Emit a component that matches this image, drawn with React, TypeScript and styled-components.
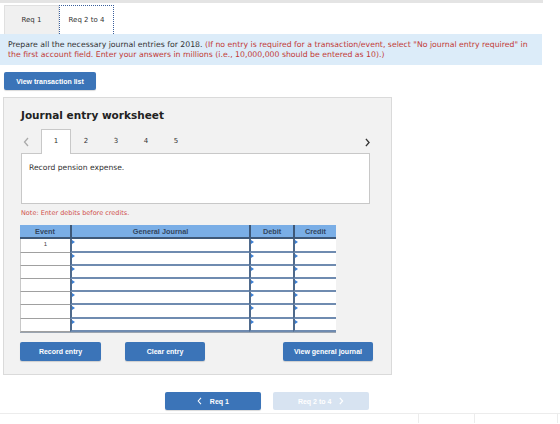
import React from "react";
import styled, { createGlobalStyle } from "styled-components";

const Global = createGlobalStyle`
  html, body { margin: 0; padding: 0; background: #fff; }
  body { font-family: "DejaVu Sans", Verdana, sans-serif; color: #333; }
  * { box-sizing: border-box; }
`;

const Page = styled.div`
  width: 560px;
  height: 424px;
  overflow: hidden;
  display: flex;
  flex-direction: column;
`;

const TopBar = styled.div`
  width: 543px;
  height: 3px;
  background: #e4e4e4;
`;

const TabRow = styled.div`
  display: flex;
  padding: 2px 0 0 4px;
  height: 31px;
`;

const ReqTab = styled.div<{ $active?: boolean }>`
  width: 55px;
  height: 29px;
  display: flex;
  align-items: center;
  justify-content: center;
  font-size: 7px;
  color: #333;
  background: ${(p) => (p.$active ? "#fff" : "#f0f0f0")};
  border: ${(p) => (p.$active ? "1px dotted #3a5f9c" : "1px solid #e0e0e0")};
  border-bottom: none;
`;

const InfoBox = styled.div`
  width: 542px;
  height: 31px;
  background: #dcecf9;
  padding: 6px 8px 0;
  font-size: 7.75px;
  line-height: 10px;
  color: #333;
  white-space: nowrap;
`;

const Red = styled.span`
  color: #c23a36;
`;

const Btn = styled.button<{ $w: number; $h?: number; $light?: boolean }>`
  width: ${(p) => p.$w}px;
  height: ${(p) => p.$h ?? 19}px;
  border: none;
  border-radius: 2px;
  background: ${(p) => (p.$light ? "#d7e3f1" : "#3b74b8")};
  color: #fff;
  font-family: "Liberation Sans", Arial, sans-serif;
  font-weight: bold;
  font-size: 7px;
  padding: 0;
  display: flex;
  align-items: center;
  justify-content: center;
  gap: 8px;
  box-shadow: ${(p) => (p.$light ? "none" : "0 1px 1px rgba(0,0,0,0.15)")};
`;

const TransRow = styled.div`
  padding: 7px 0 0 4px;
`;

const Panel = styled.div`
  margin: 7px 0 0 3px;
  width: 389px;
  height: 278px;
  background: #f2f2f2;
  border: 1px solid #dadada;
  padding: 10px 18px 0 16px;
  display: flex;
  flex-direction: column;
`;

const Title = styled.div`
  font-weight: bold;
  font-size: 10.5px;
  color: #222;
  padding-left: 1px;
  height: 22px;
  line-height: 14px;
`;

const NavRow = styled.div`
  display: flex;
  align-items: flex-end;
  height: 23px;
  padding-left: 1px;
  position: relative;
  z-index: 1;
`;

const Chevron = styled.div<{ $dark?: boolean; $w: number }>`
  width: ${(p) => p.$w}px;
  height: 22px;
  display: flex;
  align-items: center;
  justify-content: flex-start;
  padding-left: ${(p) => (p.$dark ? 0 : 2)}px;
  color: ${(p) => (p.$dark ? "#333" : "#aaa")};
`;

const NumTab = styled.div<{ $active?: boolean }>`
  width: 30px;
  height: 25px;
  display: flex;
  align-items: center;
  justify-content: center;
  font-size: 7px;
  color: #333;
  padding-bottom: 3px;
  background: ${(p) => (p.$active ? "#fff" : "transparent")};
  border: 1px solid ${(p) => (p.$active ? "#c8c8c8" : "transparent")};
  border-bottom: none;
  margin-bottom: -1px;
`;

const Spacer = styled.div`
  flex: 1;
`;

const RecordBox = styled.div`
  width: 349px;
  height: 51px;
  background: #fff;
  border: 1px solid #c8c8c8;
  padding: 9px 7px;
  font-size: 7.6px;
  color: #333;
  margin-left: 1px;
`;

const Note = styled.div`
  font-size: 6.5px;
  color: #d0504a;
  margin-top: 5px;
  height: 16px;
  padding-left: 1px;
`;

const Table = styled.div`
  display: grid;
  grid-template-columns: 50px 179px 44px 43px;
  grid-template-rows: 14px 14px 13px 13px 13px 13px 14px 13px;
  width: 316px;
  border-right: 1px solid #9aa4b0;
  border-bottom: 1px solid #9aa4b0;
`;

const Head = styled.div<{ $first?: boolean }>`
  background: #7aaee6;
  border-bottom: 2px solid #3e5878;
  border-left: ${(p) => (p.$first ? "none" : "2px solid #3e5878")};
  font-family: "Liberation Sans", Arial, sans-serif;
  font-weight: bold;
  font-size: 7.3px;
  color: #34475f;
  display: flex;
  align-items: center;
  justify-content: center;
`;

const EventCell = styled.div`
  background: #fff;
  border-bottom: 1px solid #a0a0a0;
  border-left: 1px solid #c8c8c8;
  font-family: "Liberation Sans", Arial, sans-serif;
  font-size: 6px;
  color: #444;
  display: flex;
  justify-content: center;
  padding-top: 2px;
`;

const InputCell = styled.div`
  position: relative;
  background: #fff;
  border-left: 2px solid #4f6a8c;
  border-bottom: 2px solid #6f8bb0;
  &::before {
    content: "";
    position: absolute;
    left: 0;
    top: 1px;
    border-top: 2px solid transparent;
    border-bottom: 2px solid transparent;
    border-left: 3px solid #3b7fd4;
  }
`;

const BtnRow = styled.div`
  display: flex;
  margin-top: 9px;
  gap: 24px;
`;

const RightBtn = styled.div`
  margin-left: auto;
`;

const BottomNav = styled.div`
  display: flex;
  gap: 12px;
  padding: 17px 0 0 165px;
`;

const Footer = styled.div`
  margin-top: 3px;
  display: grid;
  grid-template-columns: 419px 56px 83px 2px;
  height: 10px;
  border-top: 1px solid #ececec;
`;

const FootCell = styled.div<{ $line?: boolean }>`
  border-right: ${(p) => (p.$line ? "1px solid #ececec" : "none")};
`;

const ChevL = ({ color = "#aaa", size = 10 }: { color?: string; size?: number }) => (
  <svg width={size * 0.6} height={size} viewBox="0 0 6 10">
    <path d="M5 1 L1.5 5 L5 9" fill="none" stroke={color} strokeWidth="1.3" />
  </svg>
);

const ChevR = ({ color = "#333", size = 10 }: { color?: string; size?: number }) => (
  <svg width={size * 0.6} height={size} viewBox="0 0 6 10">
    <path d="M1 1 L4.5 5 L1 9" fill="none" stroke={color} strokeWidth="1.5" />
  </svg>
);

export default function App() {
  const rows = Array.from({ length: 7 });
  return (
    <>
      <Global />
      <Page>
        <TopBar />
        <TabRow>
          <ReqTab>Req 1</ReqTab>
          <ReqTab $active>Req 2 to 4</ReqTab>
        </TabRow>
        <InfoBox>
          Prepare all the necessary journal entries for 2018.{" "}
          <Red>
            (If no entry is required for a transaction/event, select "No journal entry required" in
            <br />
            the first account field. Enter your answers in millions (i.e., 10,000,000 should be entered as 10).)
          </Red>
        </InfoBox>
        <TransRow>
          <Btn $w={92} $h={18}>View transaction list</Btn>
        </TransRow>
        <Panel>
          <Title>Journal entry worksheet</Title>
          <NavRow>
            <Chevron $w={20}>
              <ChevL />
            </Chevron>
            <NumTab $active>1</NumTab>
            <NumTab>2</NumTab>
            <NumTab>3</NumTab>
            <NumTab>4</NumTab>
            <NumTab>5</NumTab>
            <Spacer />
            <Chevron $dark $w={8}>
              <ChevR size={9} />
            </Chevron>
          </NavRow>
          <RecordBox>Record pension expense.</RecordBox>
          <Note>Note: Enter debits before credits.</Note>
          <Table>
            <Head $first>Event</Head>
            <Head>General Journal</Head>
            <Head>Debit</Head>
            <Head>Credit</Head>
            {rows.map((_, i) => (
              <React.Fragment key={i}>
                <EventCell>{i === 0 ? "1" : ""}</EventCell>
                <InputCell />
                <InputCell />
                <InputCell />
              </React.Fragment>
            ))}
          </Table>
          <BtnRow>
            <Btn $w={81}>Record entry</Btn>
            <Btn $w={80}>Clear entry</Btn>
            <RightBtn>
              <Btn $w={90}>View general journal</Btn>
            </RightBtn>
          </BtnRow>
        </Panel>
        <BottomNav>
          <Btn $w={96} $h={18}>
            <ChevL color="#fff" size={8} />
            Req 1
          </Btn>
          <Btn $w={96} $h={18} $light>
            Req 2 to 4
            <ChevR color="#fff" size={8} />
          </Btn>
        </BottomNav>
        <Footer>
          <FootCell $line />
          <FootCell $line />
          <FootCell $line />
          <FootCell />
        </Footer>
      </Page>
    </>
  );
}
